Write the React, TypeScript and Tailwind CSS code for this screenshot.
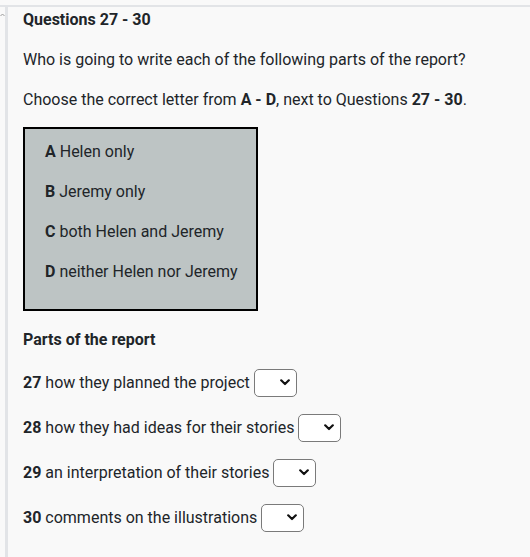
import React from "react";

function Sel() {
  return (
    <span className="ml-[4px] inline-flex h-[28px] w-[43px] items-center justify-end rounded-[5px] border border-[#7a7a7a] bg-white pr-[6px] align-middle">
      <svg width="10" height="7" viewBox="0 0 10 7" fill="none">
        <path d="M1.2 1.3 L5 5 L8.8 1.3" stroke="#111" strokeWidth="2.2" strokeLinecap="round" strokeLinejoin="round" />
      </svg>
    </span>
  );
}

export default function App() {
  const options = [
    ["A", "Helen only"],
    ["B", "Jeremy only"],
    ["C", "both Helen and Jeremy"],
    ["D", "neither Helen nor Jeremy"],
  ];
  const parts = [
    ["27", "how they planned the project"],
    ["28", "how they had ideas for their stories"],
    ["29", "an interpretation of their stories"],
    ["30", "comments on the illustrations"],
  ];
  return (
    <div
      className="relative h-[557px] w-[530px] overflow-hidden bg-[#f9f9f9] pt-[5px] pl-[5px] text-[16px] leading-[24px] text-[#212529]"
      style={{ fontFamily: "Roboto, 'Liberation Sans', sans-serif" }}
    >
      <svg className="absolute left-0 top-[13px]" width="5" height="4" viewBox="0 0 5 4">
        <path d="M0.5 3 L2.5 1 L4.5 3" stroke="#9a9a9a" strokeWidth="1" fill="none" />
      </svg>
      <div className="absolute left-0 top-[5px] h-[2px] w-full bg-[#e2e4e7]" />
      <div className="flex h-full flex-col border-l-[3px] border-[#e2e4e7] pt-[3px] pl-[15px]">
        <div className="font-bold">Questions 27 - 30</div>
        <p className="mt-[16px]">Who is going to write each of the following parts of the report?</p>
        <p className="mt-[16px]">
          Choose the correct letter from <b>A - D</b>, next to Questions <b>27 - 30</b>.
        </p>
        <div className="mt-[15px] flex h-[184px] w-[235px] flex-col gap-[16px] border-2 border-black bg-[#bdc4c4] pt-[11px] pl-[20px]">
          {options.map(([l, t]) => (
            <div key={l}>
              <b>{l}</b> {t}
            </div>
          ))}
        </div>
        <div className="mt-[17px] font-bold">Parts of the report</div>
        <div className="mt-[16px] flex flex-col gap-[16px]">
          {parts.map(([n, t]) => (
            <div key={n} className="flex h-[29px] items-center">
              <span>
                <b>{n}</b> {t}
              </span>
              <Sel />
            </div>
          ))}
        </div>
      </div>
    </div>
  );
}
